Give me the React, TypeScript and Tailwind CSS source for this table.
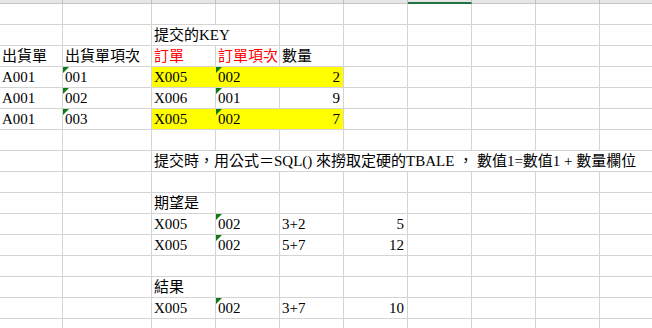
import React from 'react'

type Cell = {
  t?: string
  red?: boolean
  right?: boolean
  yellow?: boolean
  joinRight?: boolean
  tri?: boolean
  span?: 2 | 8
}

const COLS = 10

// each row lists cells from column A; missing ones are blank
const rows: Cell[][] = [
  [],
  [{}, {}, { t: '提交的KEY', span: 2 }],
  [{ t: '出貨單' }, { t: '出貨單項次' }, { t: '訂單', red: true }, { t: '訂單項次', red: true }, { t: '數量' }],
  [
    { t: 'A001' },
    { t: '001', tri: true },
    { t: 'X005', yellow: true, joinRight: true },
    { t: '002', yellow: true, joinRight: true, tri: true },
    { t: '2', yellow: true, right: true },
  ],
  [{ t: 'A001' }, { t: '002', tri: true }, { t: 'X006' }, { t: '001', tri: true }, { t: '9', right: true }],
  [
    { t: 'A001' },
    { t: '003', tri: true },
    { t: 'X005', yellow: true, joinRight: true },
    { t: '002', yellow: true, joinRight: true, tri: true },
    { t: '7', yellow: true, right: true },
  ],
  [],
  [{}, {}, { t: '提交時，用公式＝SQL() 來撈取定硬的TBALE ，  數值1=數值1 + 數量欄位', span: 8 }],
  [],
  [{}, {}, { t: '期望是' }],
  [{}, {}, { t: 'X005' }, { t: '002', tri: true }, { t: '3+2' }, { t: '5', right: true }],
  [{}, {}, { t: 'X005' }, { t: '002', tri: true }, { t: '5+7' }, { t: '12', right: true }],
  [],
  [{}, {}, { t: '結果' }],
  [{}, {}, { t: 'X005' }, { t: '002', tri: true }, { t: '3+7' }, { t: '10', right: true }],
  [],
]

const Triangle = () => (
  <svg className="absolute left-0 top-0" width="6" height="6" viewBox="0 0 6 6">
    <polygon points="0,0 6,0 0,6" fill="#0f7b14" />
  </svg>
)

const GridCell = ({ cell }: { cell: Cell }) => {
  const span = cell.span === 2 ? 'col-span-2' : cell.span === 8 ? 'col-span-8' : ''
  const bg = cell.yellow ? 'bg-[#ffff00]' : 'bg-white'
  const borderR = cell.joinRight ? 'border-r-[#ffff00]' : 'border-r-[#d4d4d4]'
  const color = cell.red ? 'text-[#ff0000]' : 'text-black'
  const align = cell.right ? 'justify-end pr-[3px]' : 'justify-start pl-[2px]'
  return (
    <div
      className={`relative flex h-[21px] items-end overflow-visible whitespace-nowrap border-b border-r border-b-[#d4d4d4] pb-[1px] ${span} ${bg} ${borderR} ${color} ${align}`}
    >
      {cell.tri && <Triangle />}
      <span className="relative z-10 leading-[17px]">{cell.t}</span>
    </div>
  )
}

export default function App() {
  const header = Array.from({ length: COLS }, (_, i) => i)

  return (
    <div
      className="h-[328px] w-[652px] overflow-hidden bg-white text-[15px]"
      style={{ fontFamily: '"Liberation Serif", "Noto Sans CJK TC", serif' }}
    >
      <div className="grid w-max grid-cols-[63px_89px_repeat(8,64px)]">
        {/* column header strip */}
        {header.map((i) => (
          <div
            key={`h${i}`}
            className={`h-[4px] border-r border-r-[#c0c0c0] bg-[#e6e6e6] ${
              i === 6 ? 'border-b-2 border-b-[#217346]' : 'border-b border-b-[#c6c6c6]'
            }`}
          />
        ))}

        {rows.map((row, r) => {
          const cells: React.ReactNode[] = []
          let c = 0
          while (c < COLS) {
            const cell = row[c] ?? {}
            cells.push(<GridCell key={`${r}-${c}`} cell={cell} />)
            c += cell.span ?? 1
          }
          return cells
        })}
      </div>
    </div>
  )
}
